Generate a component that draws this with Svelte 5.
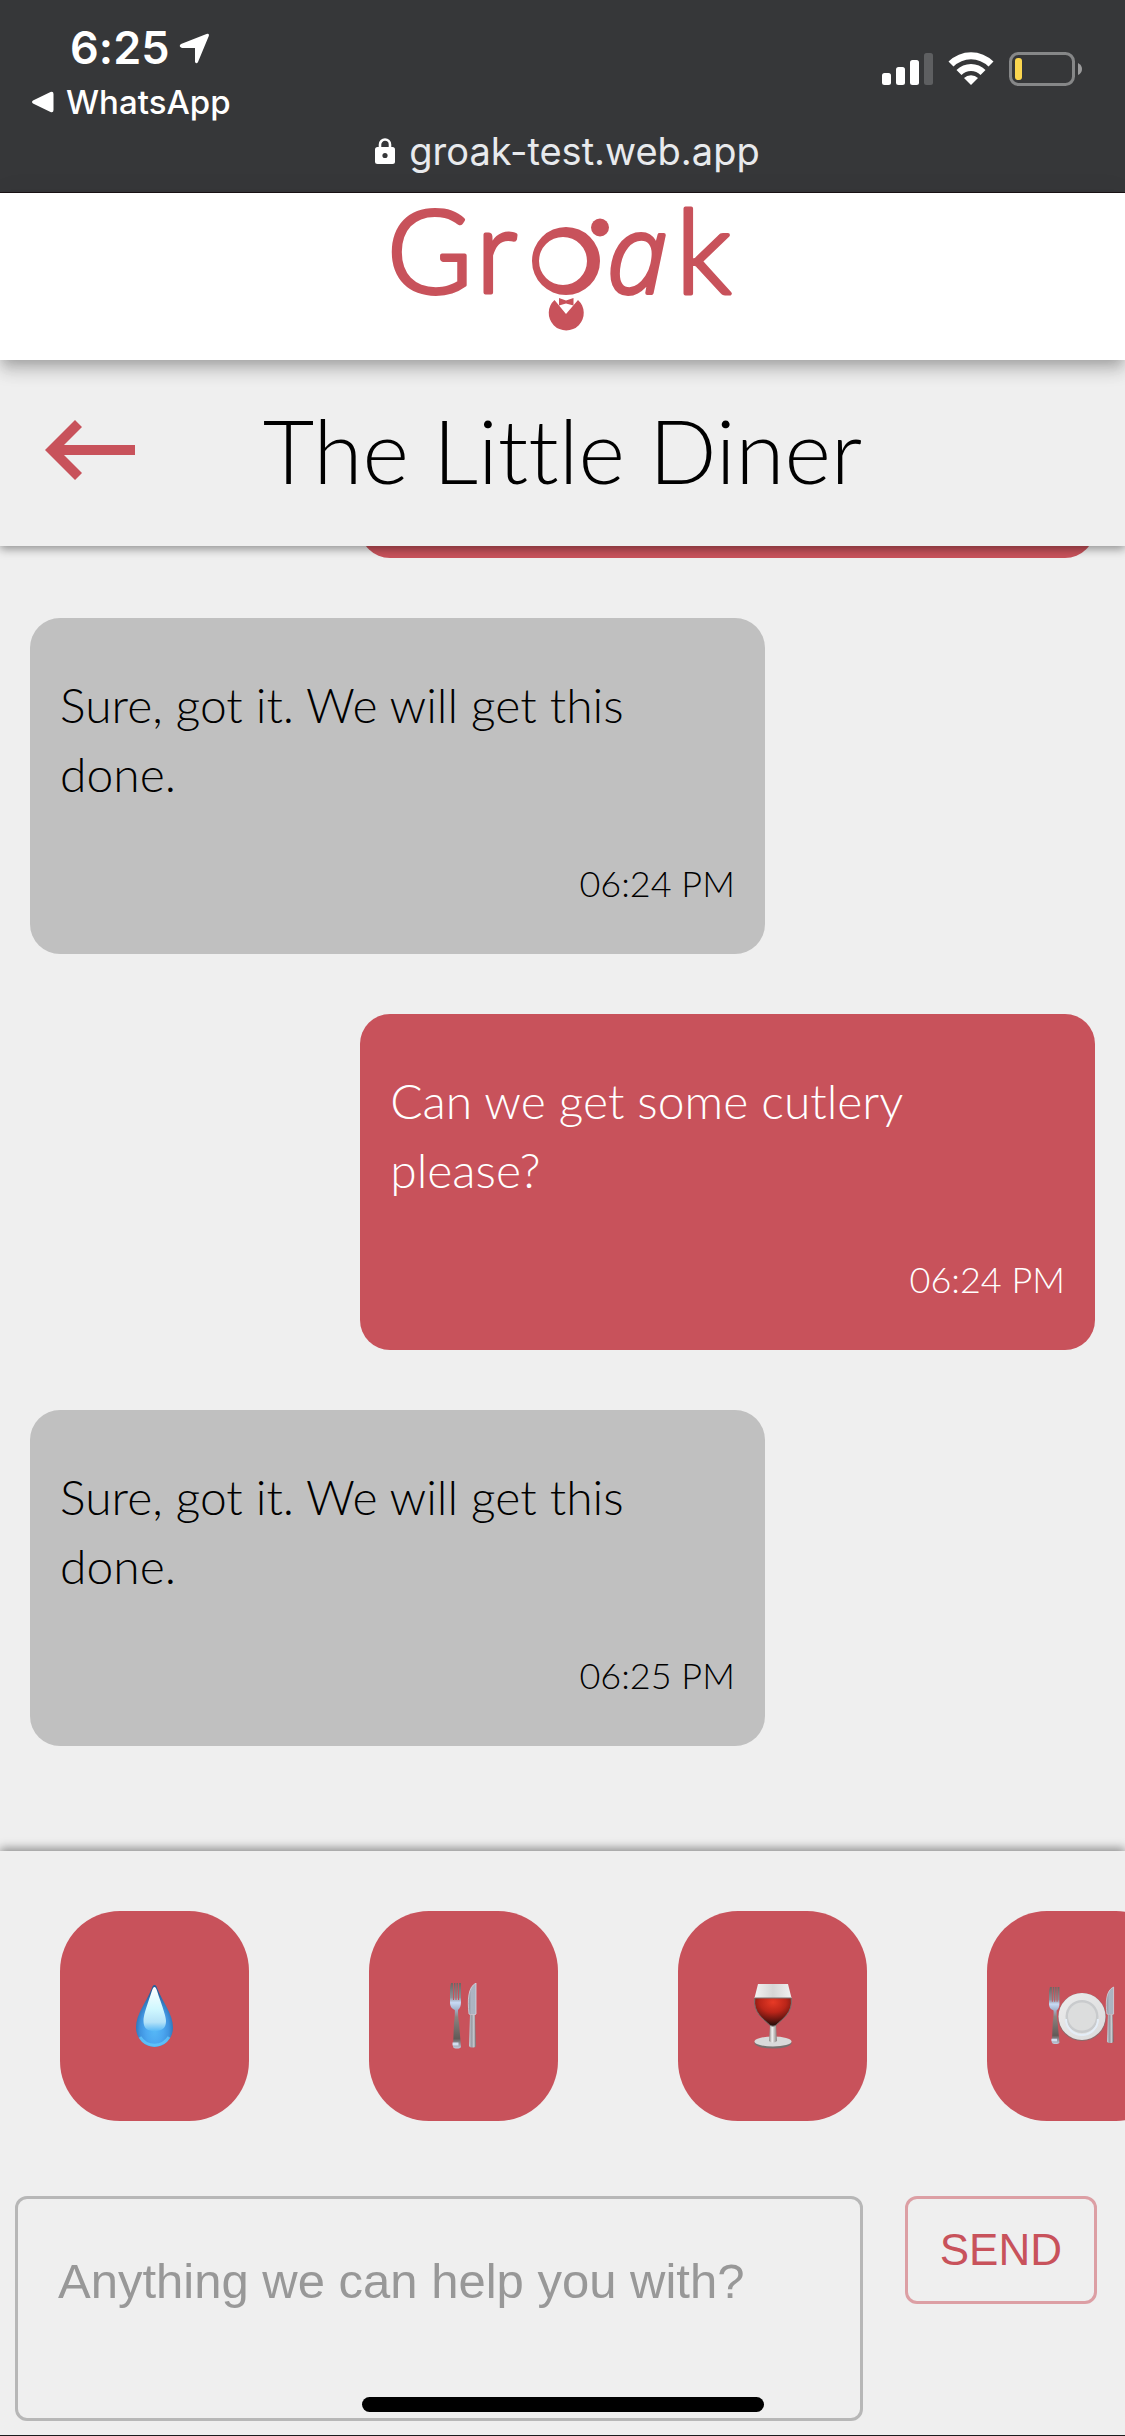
<script>
  const messages = [
    { from: 'guest', text: '', time: '' },
    { from: 'diner', text: 'Sure, got it. We will get this done.', time: '06:24 PM' },
    { from: 'guest', text: 'Can we get some cutlery please?', time: '06:24 PM' },
    { from: 'diner', text: 'Sure, got it. We will get this done.', time: '06:25 PM' }
  ];
  const quick = [
    { id: 'water', label: 'Water' },
    { id: 'cutlery', label: 'Cutlery' },
    { id: 'wine', label: 'Wine' },
    { id: 'plate', label: 'Plates' }
  ];
  let draft = $state('');
</script>

{#snippet fork()}
  <path d="M1 0h2v17h1V0h1.500v17h1V0h1.500v17h1V0h2v19c0 4-1 6-3 8 0 3 .3 9 1 13l2 24c-1 2-7 2-8 0l1-24c.6-4 1-10 .8-13C1 25 0 23 0 19V5z" fill="url(#forkFill)" />
  <path d="M2.500 61h6" stroke="#d3def0" stroke-width="3" />
{/snippet}
{#snippet knife()}
  <path d="M8 0v31c0 1-6 1-7 0C-.5 17 0 4 8 0z" fill="url(#bladeFill)" stroke="#d5dbe4" stroke-width=".8" />
  <path d="M2 32h5l1 31c-1 2-6 2-7 0z" fill="url(#handleFill)" />
{/snippet}

<div class="app">
  <div class="status">
    <div class="status-top">
      <div class="status-left">
        <div class="clock">
          <span>6:25</span>
          <svg width="31" height="31" viewBox="0 0 31 31" aria-hidden="true"><path d="M2 11 27.500 1q3-.8 2.300 2L19 29q-1.500 2.500-3 0V15H3q-4-1.500-1-4z" fill="#fff" /></svg>
        </div>
        <a class="back-app" href="#whatsapp">
          <svg width="22" height="22" viewBox="0 0 22 22" aria-hidden="true"><path d="M1 9.500 18.500 1Q21.500 0 21.500 3v16q0 3-3 2L1 12.500q-2-1.500 0-3z" fill="#fff" /></svg>
          <span>WhatsApp</span>
        </a>
      </div>
      <div class="status-icons">
        <svg width="51" height="34" viewBox="0 0 51 34" aria-hidden="true">
          <rect x="0" y="21" width="9" height="12" rx="2.500" fill="#fff" />
          <rect x="14" y="15" width="9" height="18" rx="2.500" fill="#fff" />
          <rect x="28" y="8" width="9" height="25" rx="2.500" fill="#fff" />
          <rect x="42" y="1" width="9" height="32" rx="2.500" fill="#5e5f61" />
        </svg>
        <svg width="46" height="34" viewBox="0 0 46 34" aria-hidden="true">
          <path d="M.5 9.500a32 32 0 0 1 45 0l-5 5a25 25 0 0 0-35 0z" fill="#fff" />
          <path d="M8.500 18a20.500 20.500 0 0 1 29 0l-5 5a13.500 13.500 0 0 0-19 0z" fill="#fff" />
          <path d="M16 26a10 10 0 0 1 14 0l-7 7z" fill="#fff" />
        </svg>
        <svg width="73" height="34" viewBox="0 0 73 34" aria-hidden="true">
          <rect x="1.500" y="1.500" width="63" height="31" rx="8" fill="none" stroke="#868788" stroke-width="3" />
          <rect x="6" y="6" width="7" height="22" rx="3" fill="#fbd64f" />
          <path d="M69 11q4 2 4 6t-4 6z" fill="#9b9b9c" />
        </svg>
      </div>
    </div>
    <div class="address">
      <svg width="20" height="26" viewBox="0 0 20 26" aria-hidden="true">
        <path d="M5 10V6.500a5 5 0 0 1 10 0V10" fill="none" stroke="#fff" stroke-width="2.600" />
        <rect x="0" y="9" width="20" height="17" rx="2.500" fill="#fff" />
        <circle cx="10" cy="17.500" r="2.600" fill="#363739" />
      </svg>
      <span>groak-test.web.app</span>
    </div>
  </div>

  <header class="brand">
    <svg class="logo" width="345" height="130" viewBox="0 0 345 130" role="img" aria-label="Groak">
      <g class="word">
        <text x="-3" y="93">G</text>
        <text x="86" y="93">r</text>
        <text class="slant" x="217" y="93">a</text>
        <text x="286" y="93">k</text>
      </g>
      <path fill="#c8525b" fill-rule="evenodd" d="M176 27a34 34 0 1 1 0 68 34 34 0 0 1 0-68zM173 37a24 24 0 1 0 0 48 24 24 0 0 0 0-48z" />
      <circle cx="210" cy="27.500" r="9" fill="#c8525b" />
      <path fill="#c8525b" d="M164.500 100A17.500 17.500 0 1 0 188 100L176 114z" />
      <path fill="#c8525b" d="M169 98l7 2.500 7.500-2.500v7.500l-7.500-2-7 2z" />
    </svg>
  </header>

  <div class="title-bar">
    <button class="back" aria-label="Back">
      <svg width="90" height="60" viewBox="0 0 90 60" aria-hidden="true"><path d="M30 0 0 30l30 30 7-7-18-18h71V25H19L37 7z" fill="#c8525b" /></svg>
    </button>
    <h1>The Little Diner</h1>
  </div>

  <main class="chat">
    {#each messages as m}
      <article class="bubble {m.from}">
        <p>{m.text}</p>
        <time>{m.time}</time>
      </article>
    {/each}
  </main>

  <footer>
    <div class="quick">
      {#each quick as q}
        <button class="tile" aria-label={q.label}>
          {#if q.id === 'water'}
            <svg width="37" height="66" viewBox="0 0 37 66" aria-hidden="true">
              <defs>
                <radialGradient id="drop" cx=".5" cy=".72" r=".6"><stop offset="0" stop-color="#56b9f7" /><stop offset=".4" stop-color="#4ba6ef" /><stop offset=".65" stop-color="#3f93df" /><stop offset="1" stop-color="#255f9c" /></radialGradient>
                <linearGradient id="dropShine" x1="0" y1="0" x2="0" y2="1"><stop offset="0" stop-color="#fff" /><stop offset=".5" stop-color="#d0f8ff" /><stop offset=".8" stop-color="#b4e2f8" /><stop offset="1" stop-color="#58b8f6" /></linearGradient>
              </defs>
              <path d="M18.500 2c1.500 0 2 1.500 3 4 5 13 15.500 25 15.500 38.500a18.500 19.500 0 0 1-37 0C0 31 10.500 19 15.500 6c1-2.500 1.500-4 3-4z" fill="url(#drop)" />
              <path d="M4 54a17 17 0 0 0 29 0" fill="none" stroke="#66cdfd" stroke-width="3" opacity=".7" />
              <path d="M18.500 4c2 0 3 6 6 14 3 9 5.500 16 5.500 20 0 8-5 10-11.500 10S7.500 46 7.500 38c0-5 2-11 5-20 3-8 4-14 6-14z" fill="url(#dropShine)" />
            </svg>
          {:else if q.id === 'cutlery'}
            <svg width="28" height="66" viewBox="0 0 28 66" aria-hidden="true">
              <defs>
                <linearGradient id="forkFill" x1="0" y1="0" x2="0" y2="1"><stop offset="0" stop-color="#6d6663" /><stop offset=".22" stop-color="#8e8f97" /><stop offset=".3" stop-color="#c8daf5" /><stop offset=".4" stop-color="#a3b4ce" /><stop offset=".52" stop-color="#8a8380" /><stop offset=".85" stop-color="#625a57" /><stop offset="1" stop-color="#c2cddf" /></linearGradient>
                <linearGradient id="bladeFill"><stop offset="0" stop-color="#8b939d" /><stop offset=".4" stop-color="#adb5c2" /><stop offset="1" stop-color="#a9b2bf" /></linearGradient>
                <linearGradient id="handleFill"><stop offset="0" stop-color="#c9ccd4" /><stop offset=".4" stop-color="#979ba3" /><stop offset=".7" stop-color="#c9ccd2" /><stop offset="1" stop-color="#6b6668" /></linearGradient>
              </defs>
              <g>{@render fork()}</g>
              <g transform="translate(18 0)">{@render knife()}</g>
            </svg>
          {:else if q.id === 'wine'}
            <svg width="38" height="66" viewBox="0 0 38 66" aria-hidden="true">
              <defs>
                <radialGradient id="wineFill" cx=".5" cy=".15" r=".8"><stop offset="0" stop-color="#e83a26" /><stop offset=".45" stop-color="#bb2519" /><stop offset=".8" stop-color="#641510" /><stop offset="1" stop-color="#2d0d0a" /></radialGradient>
                <linearGradient id="glassFill"><stop offset="0" stop-color="#f3f3f3" /><stop offset=".5" stop-color="#d6d6d6" /><stop offset="1" stop-color="#f1f1f1" /></linearGradient>
                <linearGradient id="stemFill"><stop offset="0" stop-color="#8b8683" /><stop offset=".4" stop-color="#f2f2f2" /><stop offset="1" stop-color="#857f7d" /></linearGradient>
              </defs>
              <ellipse cx="19" cy="60" rx="18.500" ry="5.500" fill="#77706f" />
              <ellipse cx="19" cy="58.500" rx="18.500" ry="5" fill="#d9d9d9" />
              <path d="M16 42h6l1 16q-4 3-8 0z" fill="url(#stemFill)" />
              <path d="M4 1h30l3.500 14h-37z" fill="url(#glassFill)" />
              <path d="M.8 15h36.400c2 15-9 21-15 27-2 1.500-4.500 1.500-6.500 0C9.700 36-1.200 30 .8 15z" fill="url(#wineFill)" stroke="#787170" stroke-width="1" />
            </svg>
          {:else}
            <svg width="66" height="66" viewBox="0 0 66 66" aria-hidden="true">
              <defs>
                <linearGradient id="plateRim" x1="0" y1="0" x2="1" y2="1"><stop offset="0" stop-color="#ececec" /><stop offset="1" stop-color="#dadbdc" /></linearGradient>
              </defs>
              <g transform="translate(0 4) scale(.95 .87)">{@render fork()}</g>
              <g transform="translate(57 4) scale(.95 .87)">{@render knife()}</g>
              <circle cx="33" cy="34" r="24" fill="#8b6b6d" />
              <circle cx="33" cy="33.500" r="23.500" fill="url(#plateRim)" />
              <circle cx="33" cy="33.500" r="16.500" fill="#c9cbcd" />
              <path d="M17 36a16 16 0 0 0 32 0" fill="none" stroke="#e4edf7" stroke-width="2" />
              <circle cx="33" cy="33.500" r="14" fill="#dcdddd" />
            </svg>
          {/if}
        </button>
      {/each}
    </div>
    <form class="compose" onsubmit={(e) => e.preventDefault()}>
      <textarea aria-label="Message" placeholder="Anything we can help you with?" bind:value={draft}></textarea>
      <button class="send" type="submit">SEND</button>
    </form>
    <div class="home"></div>
  </footer>
</div>

<style>
  :global(body) { margin: 0; background: #efefef; }
  .app {
    display: flex; flex-direction: column; height: 100vh; overflow: hidden;
    box-sizing: border-box; border-bottom: 1px solid #1c1c1e;
    background: #efefef; color: #000; font-family: Lato, "Noto Sans", sans-serif; font-weight: 300;
    font-variant-ligatures: none;
  }
  button { font: inherit; border: 0; margin: 0; padding: 0; background: none; cursor: pointer; }
  svg { display: block; flex: none; }

  .status {
    flex: none; background: #363739; border-bottom: 1px solid #1b1416; color: #fff;
    font-family: Inter, Roboto, sans-serif; padding-bottom: 17px;
  }
  .status-top { display: flex; justify-content: space-between; padding: 24px 43px 0 32px; }
  .status-left { display: flex; flex-direction: column; gap: 6px; }
  .clock { display: flex; align-items: center; gap: 10px; padding-left: 38px; font-size: 45px; line-height: 48px; font-weight: 600; }
  .back-app { display: flex; align-items: center; gap: 12px; color: #fff; text-decoration: none; font-size: 33px; line-height: 48px; font-weight: 500; }
  .status-icons { display: flex; gap: 15px; padding-top: 28px; }
  .address { display: flex; align-items: center; justify-content: center; gap: 14px; padding: 1px 0 0 10px; color: #e8eaed; font-size: 38px; line-height: 48px; font-weight: 400; }

  .brand {
    flex: none; display: flex; justify-content: center; position: relative; z-index: 3;
    background: #fff; padding: 7px 0 30px;
    box-shadow: 0 6px 12px -3px rgba(0,0,0,.2), 0 12px 15px 0 rgba(0,0,0,.14), 0 3px 30px 0 rgba(0,0,0,.05);
  }
  .logo { overflow: visible; }
  .word { font-family: Lato, sans-serif; font-size: 116px; font-weight: 300; fill: #c8525b; stroke: #c8525b; stroke-width: 4; stroke-linejoin: round; }
  .slant { font-family: "Open Sans", "Noto Sans", sans-serif; font-size: 108px; font-style: italic; }

  .title-bar {
    flex: none; display: grid; grid-template-columns: 1fr auto 1fr; align-items: center;
    position: relative; z-index: 2; background: #efefef; padding: 30px 45px 36px;
    box-shadow: 0 3px 9px 0 rgba(0,0,0,.4);
  }
  .back { justify-self: start; }
  h1 { margin: 0; font-size: 89px; line-height: 120px; font-weight: 300; }

  .chat {
    flex: 1 1 0; min-height: 0; overflow: hidden; display: flex; flex-direction: column;
    justify-content: flex-end; gap: 60px; padding: 0 30px 105px;
  }
  .bubble {
    flex: none; box-sizing: border-box; width: 69%; min-height: 336px; border-radius: 30px;
    padding: 52px 30px 44px; display: flex; flex-direction: column; justify-content: space-between;
  }
  .diner { align-self: flex-start; background: #c0c0c0; }
  .guest { align-self: flex-end; background: #c8525b; color: #fff; }
  .bubble p { margin: 0; font-size: 48px; line-height: 69px; }
  .bubble time { align-self: flex-end; font-size: 36px; line-height: 54px; }

  footer { flex: none; position: relative; background: #efefef; box-shadow: 0 -3px 9px 0 rgba(0,0,0,.4); }
  .quick { display: flex; gap: 120px; overflow: hidden; padding: 60px 60px 75px; }
  .tile {
    flex: none; width: 189px; height: 210px; border-radius: 60px; background: #c8525b;
    display: flex; align-items: center; justify-content: center;
  }
  .compose { display: flex; align-items: flex-start; gap: 42px; padding: 0 28px 14px 15px; }
  textarea {
    flex: 1; min-width: 0; box-sizing: border-box; height: 225px; resize: none; outline: 0;
    border: 3px solid #b7b7b7; border-radius: 12px; background: transparent; padding: 54px 40px;
    font: 400 49px/57px "Liberation Sans", Arial, sans-serif; color: #222;
  }
  textarea::placeholder { color: #989898; opacity: 1; }
  .send {
    flex: none; border: 3px solid #dc9fa4; border-radius: 12px; padding: 24px 32px; color: #c8525b;
    font: 400 44px/54px "Liberation Sans", Arial, sans-serif;
  }
  .home { position: absolute; left: 50%; margin-left: -201px; bottom: 23px; width: 402px; height: 15px; border-radius: 8px; background: #000; }
</style>
